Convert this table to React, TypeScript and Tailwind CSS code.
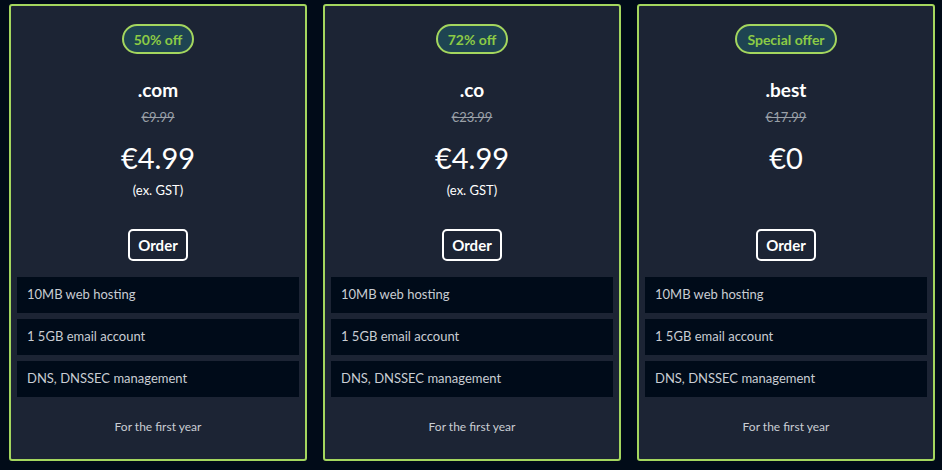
import React from "react";

const plans = [
    { badge: "50% off", name: ".com", was: "€9.99", price: "€4.99", note: "(ex. GST)" },
    { badge: "72% off", name: ".co", was: "€23.99", price: "€4.99", note: "(ex. GST)" },
    { badge: "Special offer", name: ".best", was: "€17.99", price: "€0", note: "" },
];

const features = ["10MB web hosting", "1 5GB email account", "DNS, DNSSEC management"];

export default function App() {
    return (
        <div
            className="w-[942px] h-[470px] bg-[#010b18] pt-1 pl-[9px] pr-[7px] grid grid-cols-3 gap-4 items-start"
            style={{ fontFamily: "Lato, 'Liberation Sans', sans-serif" }}
        >
            {plans.map((plan) => (
                <div
                    key={plan.name}
                    className="h-[457px] bg-[#1c2434] border-2 border-[#a4d65e] rounded-[3px] flex flex-col items-center px-[6px]"
                >
                    <div className="mt-[18px] h-[30px] px-[10px] flex items-center rounded-full border-2 border-[#a4d65e] bg-[#1e4452] text-[#8ccb45] text-[14px] font-bold">
                        {plan.badge}
                    </div>
                    <div className="mt-[24px] text-white text-[19px] font-bold leading-[24px]">{plan.name}</div>
                    <div className="mt-[6px] text-[#9aa0a8] text-[13px] leading-[18px] line-through">{plan.was}</div>
                    <div className="mt-[14px] text-white text-[29px] leading-[36px]">{plan.price}</div>
                    <div className="mt-[6px] h-[16px] text-white text-[13px] leading-[16px]">{plan.note}</div>
                    <button className="mt-[31px] h-[32px] px-[8px] rounded-[5px] border-2 border-white text-white text-[15px] font-bold leading-none">
                        Order
                    </button>
                    <div className="mt-[16px] w-full flex flex-col gap-[6px]">
                        {features.map((f) => (
                            <div key={f} className="h-[36px] bg-[#000b19] flex items-center px-[10px] text-[#c9cdd3] text-[13px]">
                                {f}
                            </div>
                        ))}
                    </div>
                    <div className="mt-[21px] text-[#c9cdd3] text-[12px]">For the first year</div>
                </div>
            ))}
        </div>
    );
}
